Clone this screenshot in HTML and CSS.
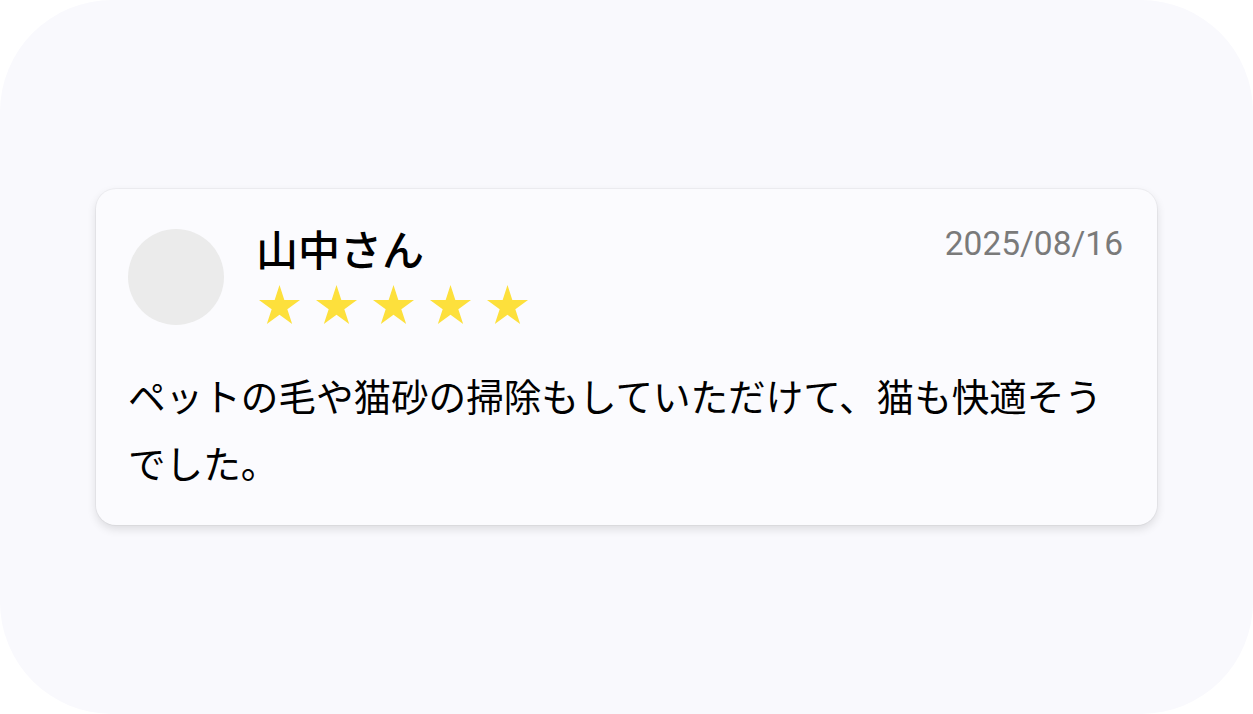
FILE: index.html
```html
<!DOCTYPE html>
<html lang="ja">
<head>
<meta charset="utf-8">
<title>Review</title>
<link rel="stylesheet" href="styles.css">
</head>
<body>
<div class="screen">
  <div class="card">
    <div class="header">
      <div class="avatar"></div>
      <div class="who">
        <div class="name">山中さん</div>
        <div class="stars">
          <svg class="star" viewBox="0 0 100 95"><polygon points="50,0 61.8,36.3 100,36.3 69.1,58.8 80.9,95.1 50,72.7 19.1,95.1 30.9,58.8 0,36.3 38.2,36.3"/></svg>
          <svg class="star" viewBox="0 0 100 95"><polygon points="50,0 61.8,36.3 100,36.3 69.1,58.8 80.9,95.1 50,72.7 19.1,95.1 30.9,58.8 0,36.3 38.2,36.3"/></svg>
          <svg class="star" viewBox="0 0 100 95"><polygon points="50,0 61.8,36.3 100,36.3 69.1,58.8 80.9,95.1 50,72.7 19.1,95.1 30.9,58.8 0,36.3 38.2,36.3"/></svg>
          <svg class="star" viewBox="0 0 100 95"><polygon points="50,0 61.8,36.3 100,36.3 69.1,58.8 80.9,95.1 50,72.7 19.1,95.1 30.9,58.8 0,36.3 38.2,36.3"/></svg>
          <svg class="star" viewBox="0 0 100 95"><polygon points="50,0 61.8,36.3 100,36.3 69.1,58.8 80.9,95.1 50,72.7 19.1,95.1 30.9,58.8 0,36.3 38.2,36.3"/></svg>
        </div>
      </div>
      <div class="date">2025/08/16</div>
    </div>
    <p class="body">ペットの毛や猫砂の掃除もしていただけて、猫も快適そうでした。</p>
  </div>
</div>
</body>
</html>
```

FILE: styles.css
```css
html, body {
  margin: 0;
  padding: 0;
  background: #ffffff;
}

.screen {
  width: 1253px;
  height: 714px;
  border-radius: 112px;
  background: #f9f9fd;
  display: flex;
  align-items: center;
  justify-content: center;
  font-family: "Noto Sans CJK JP", "Noto Sans", sans-serif;
  color: #000000;
}

.card {
  width: 1061px;
  box-sizing: border-box;
  padding: 40px 34px 30px 32px;
  background: #fbfbfe;
  border-radius: 20px;
  box-shadow: 0 0 0 1px rgba(0, 0, 0, 0.035), 0 4px 10px rgba(0, 0, 0, 0.12);
}

.header {
  display: flex;
  align-items: center;
  gap: 32px;
}

.avatar {
  width: 96px;
  height: 96px;
  border-radius: 50%;
  background: #ebebeb;
  flex: none;
}

.who {
  flex: 1;
  display: flex;
  flex-direction: column;
  height: 96px;
}

.name {
  font-size: 42px;
  font-weight: 500;
  line-height: 38px;
}

.stars {
  display: flex;
  gap: 16px;
  height: 58px;
  box-sizing: border-box;
  align-items: flex-end;
  padding: 0 0 1px 3px;
}

.star {
  width: 41px;
  height: 39px;
  fill: #fde03c;
}

.date {
  align-self: flex-start;
  margin-top: -5px;
  font-family: Roboto, "Liberation Sans", sans-serif;
  font-size: 33.5px;
  color: #7a7a7a;
}

.body {
  margin: 36px 0 0 0;
  font-size: 37.6px;
  line-height: 67px;
}
```
